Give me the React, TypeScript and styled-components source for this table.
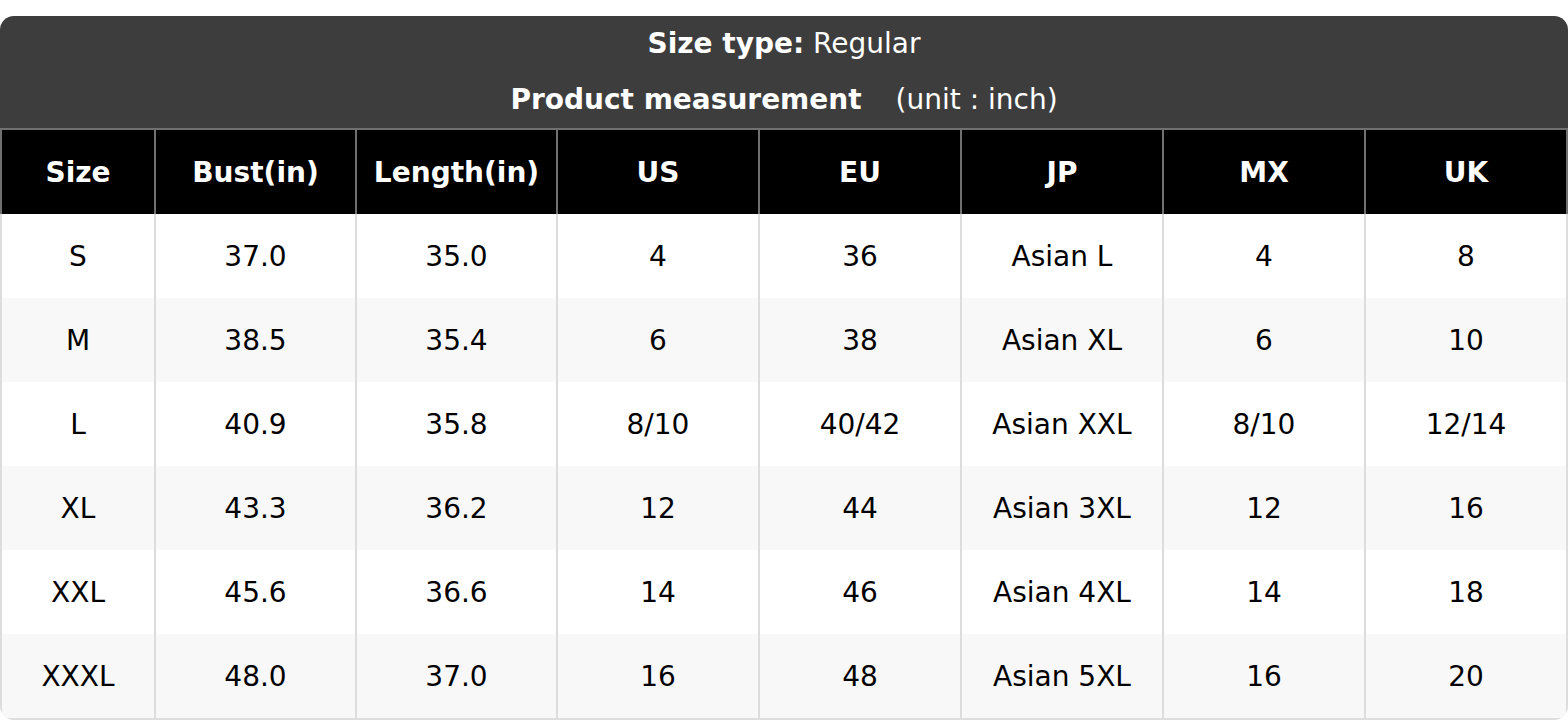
import React from "react";
import styled, { createGlobalStyle } from "styled-components";

const GlobalStyle = createGlobalStyle`
  html, body {
    margin: 0;
    padding: 0;
    background: #ffffff;
  }
  body {
    font-family: "DejaVu Sans", "Liberation Sans", sans-serif;
    color: #000;
  }
`;

const Page = styled.div`
  padding-top: 16px;
  width: 1568px;
`;

const Card = styled.div`
  border-radius: 14px;
  overflow: hidden;
  background: #fff;
`;

const TitleBar = styled.div`
  background: #3d3d3d;
  color: #fff;
  text-align: center;
  font-size: 28px;
`;

const TitleLine = styled.div`
  height: 56px;
  line-height: 56px;
  white-space: nowrap;
`;

const Strong = styled.span`
  font-weight: bold;
`;

const Unit = styled.span`
  margin-left: 34px;
`;

const Table = styled.table`
  width: 100%;
  border-collapse: collapse;
  table-layout: fixed;
  font-size: 28px;
`;

const Col = styled.col<{ $w?: number }>`
  width: ${(p) => (p.$w ? `${p.$w}px` : "auto")};
`;

const HeadCell = styled.th`
  background: #000;
  color: #fff;
  font-weight: bold;
  height: 84px;
  padding: 0;
  border: 2px solid #707070;
  border-bottom: none;
  text-align: center;
  vertical-align: middle;
`;

const Row = styled.tr<{ $alt: boolean }>`
  background: ${(p) => (p.$alt ? "#f8f8f8" : "#ffffff")};
  &:last-child td {
    border-bottom: 2px solid #dddddd;
  }
`;

const Cell = styled.td`
  height: 84px;
  padding: 0;
  text-align: center;
  vertical-align: middle;
  border-left: 2px solid #dddddd;
  border-right: 2px solid #dddddd;
  color: #000;
`;

const headers = ["Size", "Bust(in)", "Length(in)", "US", "EU", "JP", "MX", "UK"];
const colWidths = [154, 201, 201, 202, 202, 202, 202, 0];

const rows: string[][] = [
  ["S", "37.0", "35.0", "4", "36", "Asian L", "4", "8"],
  ["M", "38.5", "35.4", "6", "38", "Asian XL", "6", "10"],
  ["L", "40.9", "35.8", "8/10", "40/42", "Asian XXL", "8/10", "12/14"],
  ["XL", "43.3", "36.2", "12", "44", "Asian 3XL", "12", "16"],
  ["XXL", "45.6", "36.6", "14", "46", "Asian 4XL", "14", "18"],
  ["XXXL", "48.0", "37.0", "16", "48", "Asian 5XL", "16", "20"],
];

export default function App() {
  return (
    <>
      <GlobalStyle />
      <Page>
        <Card>
          <TitleBar>
            <TitleLine>
              <Strong>Size type:</Strong> Regular
            </TitleLine>
            <TitleLine>
              <Strong>Product measurement</Strong>
              <Unit>(unit : inch)</Unit>
            </TitleLine>
          </TitleBar>
          <Table>
            <colgroup>
              {colWidths.map((w, i) => (
                <Col key={i} $w={w || undefined} />
              ))}
            </colgroup>
            <thead>
              <tr>
                {headers.map((h) => (
                  <HeadCell key={h}>{h}</HeadCell>
                ))}
              </tr>
            </thead>
            <tbody>
              {rows.map((r, i) => (
                <Row key={r[0]} $alt={i % 2 === 1}>
                  {r.map((c, j) => (
                    <Cell key={j}>{c}</Cell>
                  ))}
                </Row>
              ))}
            </tbody>
          </Table>
        </Card>
      </Page>
    </>
  );
}
